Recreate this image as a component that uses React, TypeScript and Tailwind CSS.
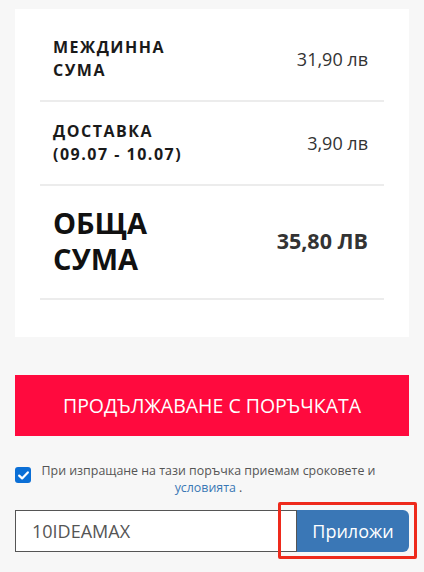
import { FC } from "react";

const font = { fontFamily: '"Open Sans", "Noto Sans", sans-serif' };

const SummaryRow: FC<{ label: string[]; value: string; big?: boolean }> = ({ label, value, big }) => (
  <div
    className={`flex items-center justify-between border-b-2 border-[#ececec] pl-[13px] pr-[16px] ${
      big ? "pt-[19px] pb-[21px]" : "py-[18px]"
    }`}
  >
    <div
      className={
        big
          ? "text-[29px] leading-[36px] font-bold text-[#111]"
          : "text-[16px] leading-[23px] font-bold text-[#1a1a1a] tracking-[1.5px]"
      }
    >
      {label.map((l) => (
        <div key={l}>{l}</div>
      ))}
    </div>
    <div className={big ? "text-[21.5px] font-bold text-[#333]" : "text-[18px] text-[#333]"}>{value}</div>
  </div>
);

export default function App() {
  return (
    <div className="w-[424px] h-[572px] bg-[#f7f7f7] px-[15px] pt-[9px] overflow-hidden" style={font}>
      <section className="bg-white px-[25px] pt-[9px] pb-[37px]">
        <SummaryRow label={["МЕЖДИННА", "СУМА"]} value="31,90 лв" />
        <SummaryRow label={["ДОСТАВКА", "(09.07 - 10.07)"]} value="3,90 лв" />
        <SummaryRow label={["ОБЩА", "СУМА"]} value="35,80 ЛВ" big />
      </section>

      <button className="mt-[38px] flex h-[61px] w-full items-center justify-center bg-[#ff0a3e] text-[19.5px] text-white">
        ПРОДЪЛЖАВАНЕ С ПОРЪЧКАТА
      </button>

      <div className="mt-[26px] flex items-start gap-[10px]">
        <span className="mt-[5px] flex h-[16px] w-[16px] shrink-0 items-center justify-center rounded-[3px] bg-[#0b6fd6]">
          <svg width="11" height="9" viewBox="0 0 11 9" fill="none">
            <path d="M1.2 4.6 L4.1 7.4 L9.8 1.4" stroke="white" strokeWidth="2.2" strokeLinecap="round" strokeLinejoin="round" />
          </svg>
        </span>
        <p className="flex-1 pr-[33px] text-center text-[12.4px] leading-[17px] text-[#555]">
          При изпращане на тази поръчка приемам сроковете и{" "}
          <a className="text-[#3a78b5]">условията</a> .
        </p>
      </div>

      <div className="relative mt-[14px] flex h-[42px]">
        <input
          readOnly
          value="10IDEAMAX"
          className="h-full min-w-0 flex-1 border border-[#555] bg-white px-[16px] text-[18px] text-[#555] outline-none"
          style={font}
        />
        <button className="h-full w-[112px] rounded-r-[6px] bg-[#3a77b6] text-[18px] text-white">Приложи</button>
        <div className="pointer-events-none absolute left-[263px] top-[-8px] h-[57px] w-[139px] rounded-[2px] border-[3px] border-[#ee2a1c]" />
      </div>
    </div>
  );
}
